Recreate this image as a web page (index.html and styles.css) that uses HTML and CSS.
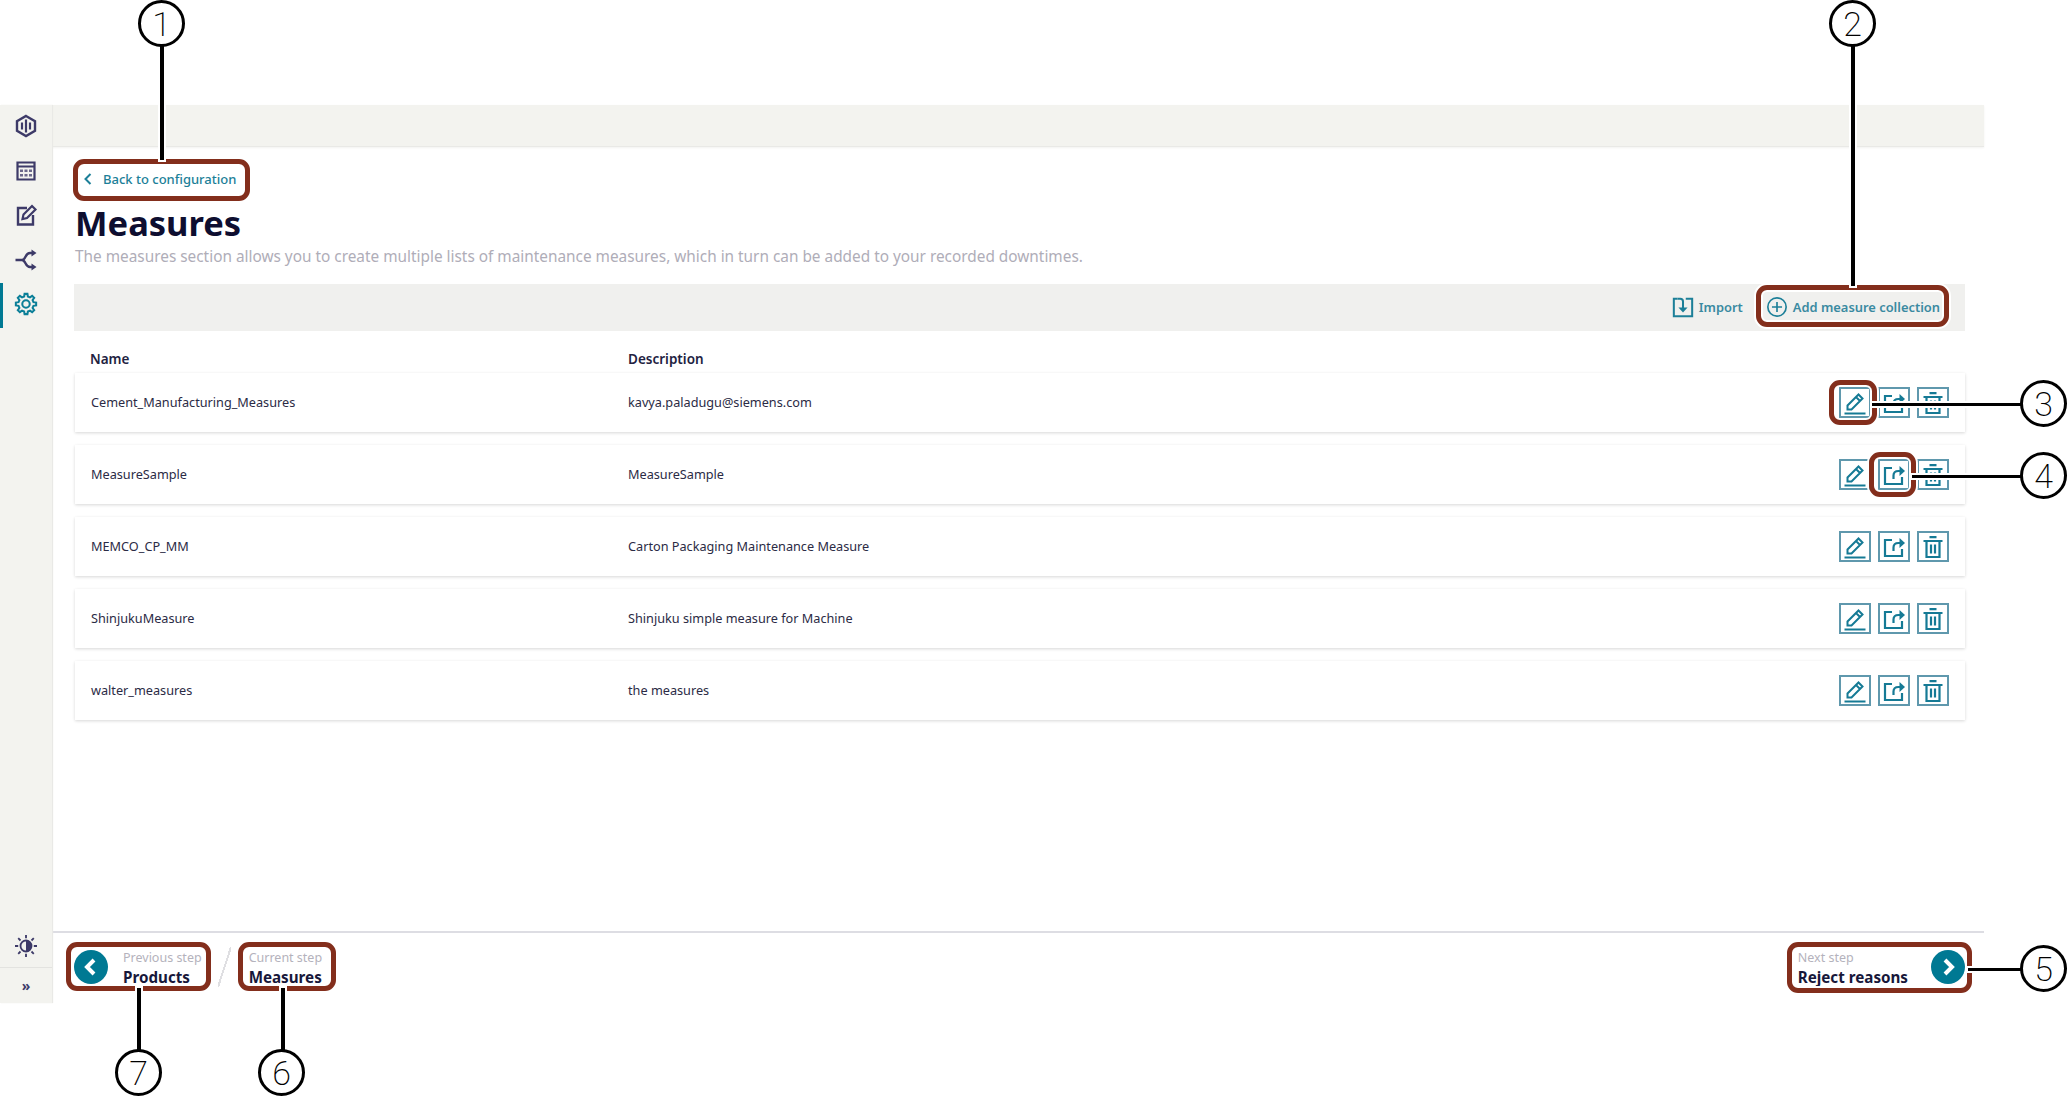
FILE: index.html
```html
<!DOCTYPE html>
<html lang="en">
<head>
<meta charset="utf-8">
<title>Measures</title>
<link rel="stylesheet" href="styles.css">
</head>
<body>
<svg class="sprite" width="0" height="0" aria-hidden="true">
  <symbol id="i-edit" viewBox="0 0 24 24"><path d="M4.500 18.500v-4L15.500 3.500l4 4-11 11z M13 6l4 4" fill="none" stroke="currentColor" stroke-width="2"/><path d="M1.500 22.500h21" stroke="currentColor" stroke-width="2"/></symbol>
  <symbol id="i-share" viewBox="0 0 24 24"><path d="M10 5H3v16h17v-7" fill="none" stroke="currentColor" stroke-width="2.200"/><path d="M11.500 16v-3.500c0-3 2-4.500 5-4.500h3" fill="none" stroke="currentColor" stroke-width="2.200"/><path d="M17.500 3 23 8l-5.500 5z" fill="currentColor"/></symbol>
  <symbol id="i-trash" viewBox="0 0 24 24"><path d="M2.500 6h19M8.500 2.200h7M5.500 6v16h13V6M10 9.500v9M14 9.500v9" fill="none" stroke="currentColor" stroke-width="2.200"/></symbol>
</svg>

<div class="app">
  <nav class="sidebar">
    <a class="nav-item"><svg class="nav-icon" viewBox="0 0 24 24"><path d="M12 2 21 7.200v9.600L12 22l-9-5.200V7.200z" fill="none" stroke="currentColor" stroke-width="2.400"/><path d="M8 8.500v7M12 5.500v13M16 8.500v7" stroke="currentColor" stroke-width="2.200"/></svg></a>
    <a class="nav-item"><svg class="nav-icon" viewBox="0 0 24 24"><path d="M3.500 3.500h17v17h-17z M3.500 7.500h17" fill="none" stroke="currentColor" stroke-width="2.200"/><path d="M6 10.500h3v2.500H6zM10.500 10.500h3v2.500h-3zM15 10.500h3v2.500h-3zM6 15h3v2.500H6zM10.500 15h3v2.500h-3zM15 15h3v2.500h-3z" fill="currentColor" opacity=".75"/></svg></a>
    <a class="nav-item"><svg class="nav-icon" viewBox="0 0 24 24"><path d="M13 5H4v16.500h15V12" fill="none" stroke="currentColor" stroke-width="2.400"/><path d="M9.500 11.500 18 3l3.500 3.500-8.500 8.500-4.500 1z" fill="none" stroke="currentColor" stroke-width="2.200"/></svg></a>
    <a class="nav-item"><svg class="nav-icon" viewBox="0 0 24 24"><path d="M1.500 12H8c4 0 3-7 8-7h3M8 12c4 0 3 7 8 7h3" fill="none" stroke="currentColor" stroke-width="2.400"/><path d="M17.500 1.500l5 3.500-5 3.500zM17.500 15.500l5 3.500-5 3.500z" fill="currentColor"/></svg></a>
    <a class="nav-item nav-item-active"><svg class="nav-icon" viewBox="0 0 24 24"><g transform="translate(12 12) scale(.93)"><polygon points="-2,-8.050 -1.530,-10.900 1.530,-10.900 2,-8.050 4.280,-7.110 6.630,-8.790 8.790,-6.630 7.110,-4.280 8.050,-2 10.900,-1.530 10.900,1.530 8.050,2 7.110,4.280 8.790,6.630 6.630,8.790 4.280,7.110 2,8.050 1.530,10.900 -1.530,10.900 -2,8.050 -4.280,7.110 -6.630,8.790 -8.790,6.630 -7.110,4.280 -8.050,2 -10.900,1.530 -10.900,-1.530 -8.050,-2 -7.110,-4.280 -8.790,-6.630 -6.630,-8.790 -4.280,-7.110" fill="none" stroke="currentColor" stroke-width="2.200"/><circle r="4" fill="none" stroke="currentColor" stroke-width="2.200"/></g></svg></a>
    <div class="sidebar-spacer"></div>
    <a class="nav-theme"><svg class="theme-icon" viewBox="0 0 24 24"><circle cx="12" cy="12" r="6" fill="none" stroke="currentColor" stroke-width="2"/><path d="M12 6a6 6 0 0 1 0 12z" fill="currentColor"/><path d="M12 0v3.500M12 20.500V24M0 12h3.500M20.500 12H24M3.500 3.500 6 6M18 18l2.500 2.500M3.500 20.500 6 18M18 6l2.500-2.500" stroke="currentColor" stroke-width="2"/></svg></a>
    <a class="nav-collapse">»</a>
  </nav>

  <main class="main">
    <div class="topbar"></div>
    <section class="content">
      <a class="back-link"><svg class="back-chevron" viewBox="0 0 10 14"><path d="M7.500 2 2.500 7l5 5" fill="none" stroke="currentColor" stroke-width="2"/></svg>Back to configuration</a>
      <h1 class="title">Measures</h1>
      <p class="subtitle">The measures section allows you to create multiple lists of maintenance measures, which in turn can be added to your recorded downtimes.</p>
      <div class="toolbar">
        <a class="tool"><svg class="tool-icon" viewBox="0 0 24 24"><path d="M6 3H2v19h20V3h-7" fill="none" stroke="currentColor" stroke-width="2.200"/><path d="M6 3h3c2 0 3 1.500 3 3v9" fill="none" stroke="currentColor" stroke-width="2.200"/><path d="M7 12.500h10L12 18z" fill="currentColor"/></svg>Import</a>
        <a class="tool"><svg class="tool-icon" viewBox="0 0 24 24"><circle cx="12" cy="12" r="10" fill="none" stroke="currentColor" stroke-width="1.800"/><path d="M12 6.500v11M6.500 12h11" stroke="currentColor" stroke-width="1.800"/></svg>Add measure collection</a>
      </div>
      <div class="table-head"><span class="col-name">Name</span><span class="col-desc">Description</span></div>
      <div class="rows">
        <div class="row"><span class="col-name">Cement_Manufacturing_Measures</span><span class="col-desc">kavya.paladugu@siemens.com</span>
          <div class="actions"><button class="act act-edit"><svg class="act-icon"><use href="#i-edit"/></svg></button><button class="act act-share"><svg class="act-icon"><use href="#i-share"/></svg></button><button class="act act-trash"><svg class="act-icon"><use href="#i-trash"/></svg></button></div></div>
        <div class="row"><span class="col-name">MeasureSample</span><span class="col-desc">MeasureSample</span>
          <div class="actions"><button class="act act-edit"><svg class="act-icon"><use href="#i-edit"/></svg></button><button class="act act-share"><svg class="act-icon"><use href="#i-share"/></svg></button><button class="act act-trash"><svg class="act-icon"><use href="#i-trash"/></svg></button></div></div>
        <div class="row"><span class="col-name">MEMCO_CP_MM</span><span class="col-desc">Carton Packaging Maintenance Measure</span>
          <div class="actions"><button class="act act-edit"><svg class="act-icon"><use href="#i-edit"/></svg></button><button class="act act-share"><svg class="act-icon"><use href="#i-share"/></svg></button><button class="act act-trash"><svg class="act-icon"><use href="#i-trash"/></svg></button></div></div>
        <div class="row"><span class="col-name">ShinjukuMeasure</span><span class="col-desc">Shinjuku simple measure for Machine</span>
          <div class="actions"><button class="act act-edit"><svg class="act-icon"><use href="#i-edit"/></svg></button><button class="act act-share"><svg class="act-icon"><use href="#i-share"/></svg></button><button class="act act-trash"><svg class="act-icon"><use href="#i-trash"/></svg></button></div></div>
        <div class="row"><span class="col-name">walter_measures</span><span class="col-desc">the measures</span>
          <div class="actions"><button class="act act-edit"><svg class="act-icon"><use href="#i-edit"/></svg></button><button class="act act-share"><svg class="act-icon"><use href="#i-share"/></svg></button><button class="act act-trash"><svg class="act-icon"><use href="#i-trash"/></svg></button></div></div>
      </div>
    </section>
    <footer class="stepper">
      <a class="step step-prev"><span class="step-btn"><svg viewBox="0 0 34 34" class="step-svg"><path d="M20 10l-7 7 7 7" fill="none" stroke="#fff" stroke-width="4"/></svg></span><span class="step-text"><small>Previous step</small><b>Products</b></span></a>
      <span class="step-slash"></span>
      <a class="step step-current"><span class="step-text"><small>Current step</small><b>Measures</b></span></a>
      <a class="step step-next"><span class="step-text"><small>Next step</small><b>Reject reasons</b></span><span class="step-btn"><svg viewBox="0 0 34 34" class="step-svg"><path d="M14 10l7 7-7 7" fill="none" stroke="#fff" stroke-width="4"/></svg></span></a>
    </footer>
  </main>
</div>

<div class="callouts">
  <div class="box box-1"></div><div class="box box-2"></div><div class="box box-3"></div><div class="box box-4"></div><div class="box box-5"></div><div class="box box-6"></div><div class="box box-7"></div>
  <div class="line line-1"></div><div class="line line-2"></div><div class="line line-3"></div><div class="line line-4"></div><div class="line line-5"></div><div class="line line-6"></div><div class="line line-7"></div>
  <div class="num num-1">1</div><div class="num num-2">2</div><div class="num num-3">3</div><div class="num num-4">4</div><div class="num num-5">5</div><div class="num num-6">6</div><div class="num num-7">7</div>
</div>
</body>
</html>
```
FILE: styles.css
```css
* { box-sizing: border-box; }
html, body { margin: 0; height: 1096px; overflow: hidden; background: #fff; }
body { position: relative; padding-top: 105px; font-family: "Noto Sans", "Open Sans", sans-serif; color: #191938; }
.sprite { position: absolute; }

.app { display: flex; width: 1984px; height: 898px; }

.sidebar { width: 52px; flex: none; display: flex; flex-direction: column; background: #f3f3ef; box-shadow: 1px 0 1px #e9e9e6; position: relative; z-index: 1; color: #3d3a68; }
.nav-item { height: 44.5px; flex: none; display: flex; align-items: center; justify-content: center; }
.nav-item-active { border-left: 3px solid #007993; padding-right: 3px; color: #0b7f98; }
.nav-icon { width: 24px; height: 24px; margin-bottom: 2px; }
.theme-icon { width: 22px; height: 22px; }
.sidebar-spacer { flex: 1; }
.nav-theme { height: 44px; display: flex; align-items: center; justify-content: center; border-bottom: 1px solid #e3e3e0; }
.nav-collapse { height: 35px; display: flex; align-items: center; justify-content: center; font-size: 14px; font-weight: 700; }

.main { flex: 1; min-width: 0; display: flex; flex-direction: column; }
.topbar { height: 42px; flex: none; background: #f3f3ef; border-bottom: 1px solid #e9e9e6; box-shadow: 0 1px 2px #f2f2f0; }

.content { flex: 1; padding: 18px 19px 0 22px; display: flex; flex-direction: column; }
.back-link { height: 28px; display: flex; align-items: center; font-size: 13px; font-weight: 500; color: #1c7f98; padding-left: 9px; }
.back-chevron { width: 10px; height: 14px; margin-right: 10px; }
.title { margin: 6px 0 0 1px; font-size: 34.500px; line-height: 48px; height: 48px; font-weight: 700; color: #0e0e30; }
.subtitle { margin: 0 0 0 1px; font-size: 15.370px; line-height: 20px; height: 20px; color: #afadb8; white-space: nowrap; }

.toolbar { margin-top: 17px; height: 47px; flex: none; background: #f0f0ee; display: flex; justify-content: flex-end; align-items: center; padding: 0 25px 2px 0; gap: 23px; }
.tool { display: flex; align-items: center; gap: 5px; font-size: 12.900px; font-weight: 600; color: #3a8aa1; }
.tool-icon { width: 22px; height: 22px; color: #1c7f98; }

.table-head { height: 42px; flex: none; display: flex; align-items: center; padding: 14px 0 0 16px; font-size: 13.500px; font-weight: 600; color: #22223f; }
.rows { display: flex; flex-direction: column; gap: 13px; }
.row { height: 59px; flex: none; display: flex; align-items: center; padding: 0 16px 0 16px; background: #fff; font-size: 12.700px; color: #2b2b45; box-shadow: 0 1px 3px rgba(0,0,0,.16); margin-left: 1px; }
.col-name { width: 537px; flex: none; margin-bottom: 2px; }
.table-head .col-name { width: 538px; margin-bottom: 0; }
.col-desc { flex: 1; }
.row .col-desc { margin-bottom: 2px; }
.actions { display: flex; gap: 7px; }
.act { width: 32px; height: 31px; padding: 0; background: #fff; border: 2px solid #5f98ad; display: flex; align-items: center; justify-content: center; color: #157a95; }
.act-icon { width: 24px; height: 24px; flex: none; }

.stepper { height: 72px; flex: none; border-top: 2px solid #dddde3; display: flex; align-items: center; padding: 0 19px 2px 22px; }
.step { display: flex; align-items: center; }
.step-btn { width: 34px; height: 34px; border-radius: 50%; background: #007993; flex: none; display: block; }
.step-svg { width: 34px; height: 34px; display: block; }
.step-text { display: flex; flex-direction: column; }
.step-text small { font-size: 12.500px; line-height: 19px; color: #b4b2bc; }
.step-text b { font-size: 15.200px; line-height: 20px; font-weight: 700; color: #17173a; }
.step-prev .step-text { margin-left: 15px; }
.step-slash { width: 13px; height: 40px; margin: 0 18px 0 16px; flex: none; background: linear-gradient(to bottom right, transparent calc(50% - 1px), #dfdfe2 calc(50% - 1px), #dfdfe2 calc(50% + 1px), transparent calc(50% + 1px)); }
.step-next { margin-left: auto; }
.step-next .step-text { margin-right: 23px; }

/* annotation overlay */
.callouts { position: absolute; inset: 0; pointer-events: none; z-index: 5; }
.box { position: absolute; border: 5px solid #832e1c; border-radius: 11px; box-shadow: 0 0 0 2px #fff, inset 0 0 0 2px #fff; }
.box-1 { left: 73px; top: 159px; width: 177px; height: 42px; }
.box-2 { left: 1756px; top: 285px; width: 193px; height: 42px; }
.box-3 { left: 1829px; top: 380px; width: 48px; height: 45px; }
.box-4 { left: 1869px; top: 452px; width: 47px; height: 45px; }
.box-5 { left: 1787px; top: 942px; width: 185px; height: 51px; }
.box-6 { left: 238px; top: 942px; width: 98px; height: 49px; }
.box-7 { left: 66px; top: 942px; width: 145px; height: 49px; }
.line { position: absolute; background: #000; box-shadow: 0 0 0 2px #fff; }
.line-1 { left: 160px; top: 46px; width: 4px; height: 114px; }
.line-2 { left: 1851px; top: 46px; width: 4px; height: 240px; }
.line-3 { left: 1872px; top: 403px; width: 150px; height: 3px; }
.line-4 { left: 1912px; top: 475px; width: 110px; height: 3px; }
.line-5 { left: 1968px; top: 968px; width: 54px; height: 3px; }
.line-6 { left: 281px; top: 988px; width: 4px; height: 62px; }
.line-7 { left: 137px; top: 988px; width: 4px; height: 62px; }
.num { position: absolute; width: 47px; height: 47px; border: 3px solid #000; border-radius: 50%; background: #fff; display: flex; align-items: center; justify-content: center; font-family: Roboto, "Liberation Sans", sans-serif; font-weight: 200; font-size: 34px; line-height: 1; color: #000; }
.num-1 { left: 138px; top: 0; }
.num-2 { left: 1829px; top: 0; }
.num-3 { left: 2020px; top: 380px; }
.num-4 { left: 2020px; top: 452px; }
.num-5 { left: 2020px; top: 945px; }
.num-6 { left: 258px; top: 1049px; }
.num-7 { left: 115px; top: 1049px; }
```
